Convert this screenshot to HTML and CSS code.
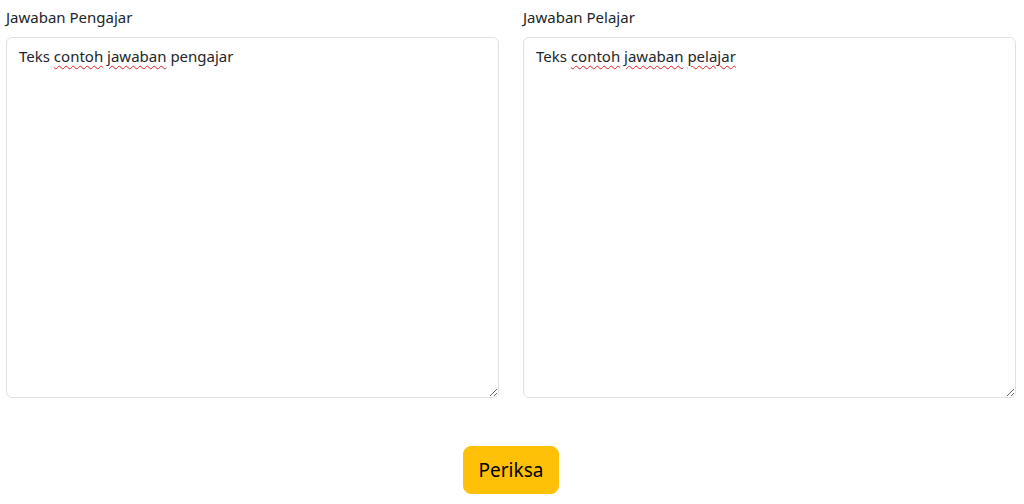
FILE: index.html
```html
<!DOCTYPE html>
<html lang="id">
<head>
<meta charset="utf-8">
<title>Periksa Jawaban</title>
<link rel="stylesheet" href="styles.css">
</head>
<body>
<main class="page">
  <div class="answers">
    <div class="field">
      <label class="field-label">Jawaban Pengajar</label>
      <div class="answer-box" contenteditable="true">Teks <span class="misspelled">contoh</span> <span class="misspelled">jawaban</span> pengajar</div>
    </div>
    <div class="field">
      <label class="field-label">Jawaban Pelajar</label>
      <div class="answer-box" contenteditable="true">Teks <span class="misspelled">contoh</span> <span class="misspelled">jawaban</span> <span class="misspelled">pelajar</span></div>
    </div>
  </div>
  <div class="actions">
    <button class="btn-check" type="button">Periksa</button>
  </div>
</main>
</body>
</html>
```

FILE: styles.css
```css
* { box-sizing: border-box; }

html, body {
  margin: 0;
  background: #ffffff;
}

body {
  font-family: "Noto Sans", "Open Sans", "Liberation Sans", sans-serif;
  color: #212529;
  font-size: 15px;
  line-height: 24px;
}

.page {
  padding: 5px 8px 0 6px;
}

.answers {
  display: grid;
  grid-template-columns: 1fr 1fr;
  column-gap: 24px;
}

.field {
  display: flex;
  flex-direction: column;
}

.field-label {
  display: block;
  margin-bottom: 8px;
}

.answer-box {
  height: 361px;
  padding: 6px 12px;
  border: 1px solid #dee2e6;
  border-radius: 6px;
  background: #fff;
  overflow: auto;
  resize: vertical;
  outline: none;
  white-space: pre-wrap;
}

.misspelled {
  text-decoration: underline wavy #e02020;
  text-decoration-thickness: 1px;
  text-underline-offset: 3px;
}

.actions {
  display: flex;
  justify-content: center;
  margin-top: 48px;
}

.btn-check {
  font-family: inherit;
  font-size: 19px;
  line-height: 30px;
  padding: 8px 15px;
  color: #000;
  background: #ffc107;
  border: 1px solid #ffc107;
  border-radius: 8px;
  cursor: pointer;
}
```
